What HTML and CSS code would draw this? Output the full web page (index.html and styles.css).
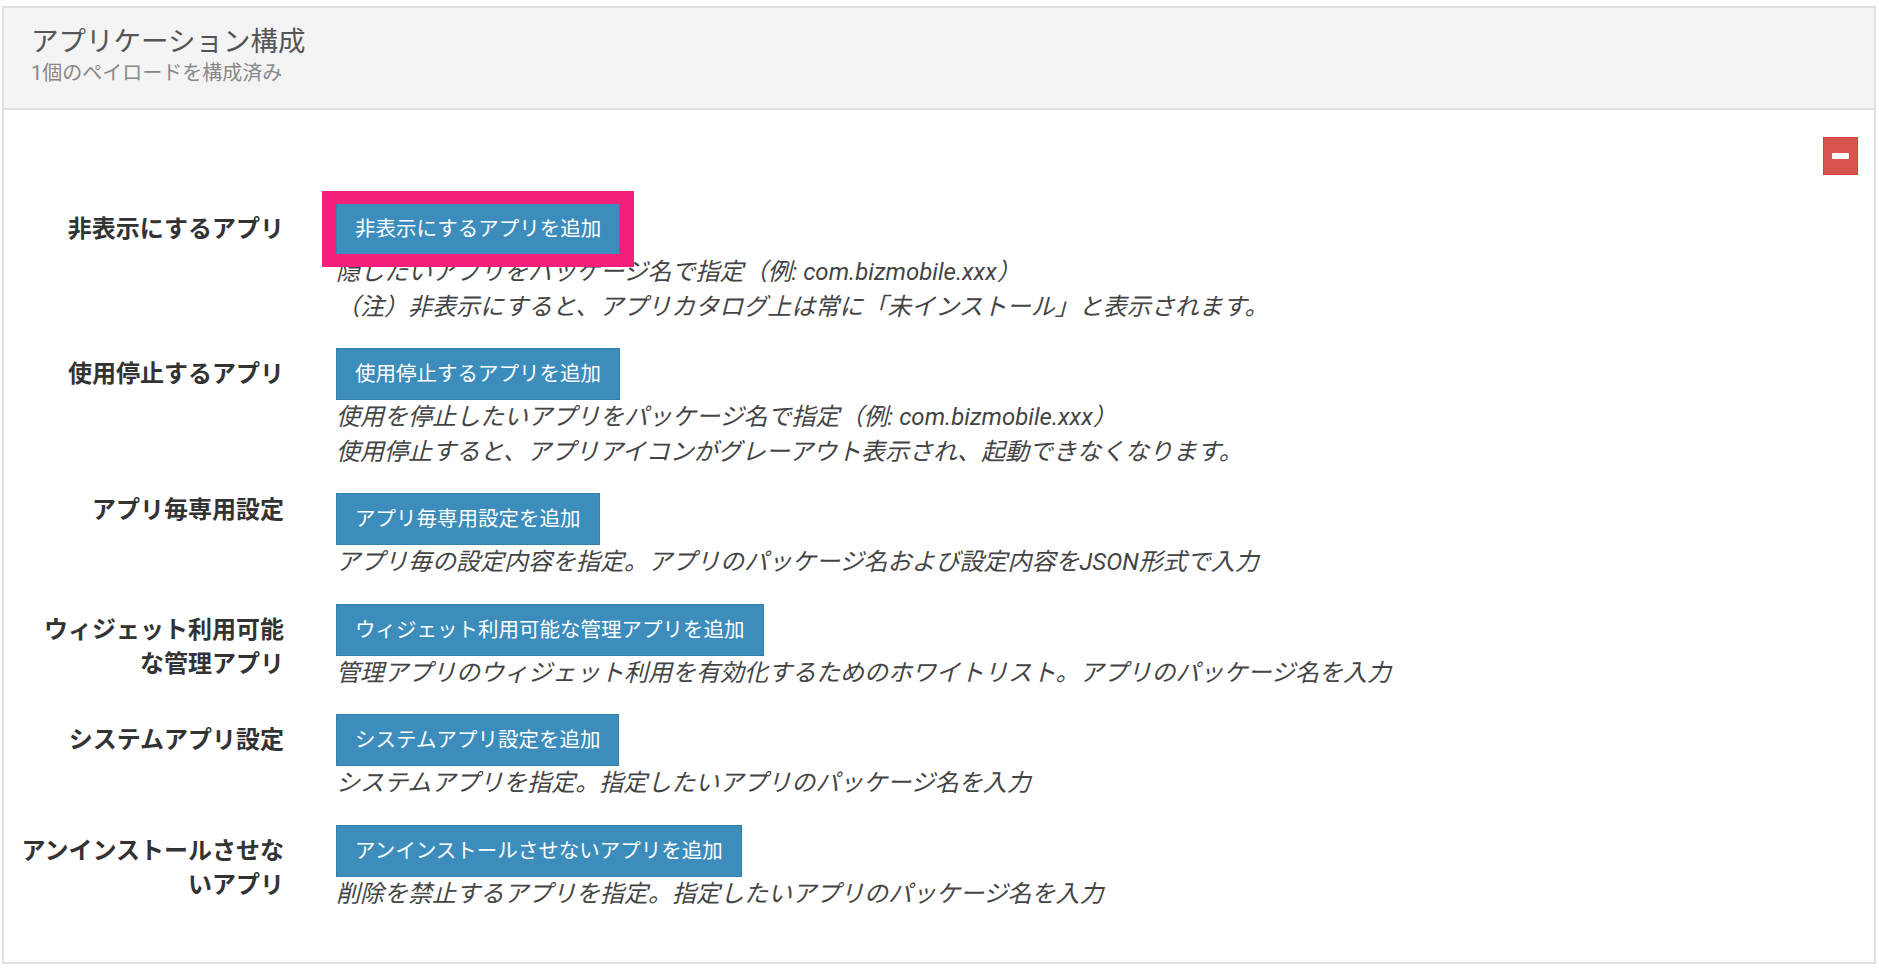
FILE: index.html
```html
<!DOCTYPE html>
<html lang="ja">
  <head>
    <meta charset="UTF-8" />
    <meta name="viewport" content="width=device-width, initial-scale=1.0" />
    <title>アプリケーション構成</title>
    <link rel="stylesheet" href="styles.css">
  </head>
  <body>
    <div class="box">
      <div class="box-header">
        <h3 class="box-title">アプリケーション構成</h3>
        <div class="box-subtitle">1個のペイロードを構成済み</div>
      </div>
      <div class="box-body">
        <div class="box-tools">
          <button type="button" class="btn-remove"><span class="minus"></span></button>
        </div>

        <div class="form-row">
          <label class="row-label">非表示にするアプリ</label>
          <div class="row-field">
            <span class="marked">
              <button type="button" class="btn-add">非表示にするアプリを追加</button>
              <span class="mark"></span>
            </span>
            <p class="help">隠したいアプリをパッケージ名で指定（例: com.bizmobile.xxx）<br>（注）非表示にすると、アプリカタログ上は常に「未インストール」と表示されます。</p>
          </div>
        </div>

        <div class="form-row">
          <label class="row-label">使用停止するアプリ</label>
          <div class="row-field">
            <button type="button" class="btn-add">使用停止するアプリを追加</button>
            <p class="help">使用を停止したいアプリをパッケージ名で指定（例: com.bizmobile.xxx）<br>使用停止すると、アプリアイコンがグレーアウト表示され、起動できなくなります。</p>
          </div>
        </div>

        <div class="form-row">
          <label class="row-label row-label-top">アプリ毎専用設定</label>
          <div class="row-field">
            <button type="button" class="btn-add">アプリ毎専用設定を追加</button>
            <p class="help">アプリ毎の設定内容を指定。アプリのパッケージ名および設定内容をJSON形式で入力</p>
          </div>
        </div>

        <div class="form-row">
          <label class="row-label">ウィジェット利用可能<br>な管理アプリ</label>
          <div class="row-field">
            <button type="button" class="btn-add">ウィジェット利用可能な管理アプリを追加</button>
            <p class="help">管理アプリのウィジェット利用を有効化するためのホワイトリスト。アプリのパッケージ名を入力</p>
          </div>
        </div>

        <div class="form-row">
          <label class="row-label">システムアプリ設定</label>
          <div class="row-field">
            <button type="button" class="btn-add">システムアプリ設定を追加</button>
            <p class="help">システムアプリを指定。指定したいアプリのパッケージ名を入力</p>
          </div>
        </div>

        <div class="form-row">
          <label class="row-label">アンインストールさせな<br>いアプリ</label>
          <div class="row-field">
            <button type="button" class="btn-add">アンインストールさせないアプリを追加</button>
            <p class="help">削除を禁止するアプリを指定。指定したいアプリのパッケージ名を入力</p>
          </div>
        </div>
      </div>
    </div>
  </body>
</html>
```

FILE: styles.css
```css
body {
  margin: 6px 3px 4px 2px;
  font-family: Roboto, "Noto Sans CJK JP", sans-serif;
  color: #333;
  background: #fff;
}
.box {
  border: 2px solid #e0e0e0;
  background: #fff;
}
.box-header {
  background: #f4f4f4;
  border-bottom: 2px solid #e0e0e0;
  padding: 16px 27px 22px;
}
.box-title {
  margin: 0;
  font-size: 27.5px;
  font-weight: normal;
  line-height: 36px;
  color: #555;
}
.box-subtitle {
  font-size: 20px;
  line-height: 26px;
  color: #888;
}
.box-body {
  padding: 27px 16px 27px 12px;
}
.box-tools {
  display: flex;
  justify-content: flex-end;
  margin-bottom: 28px;
}
.btn-remove {
  width: 35px;
  height: 38px;
  padding: 0;
  background: #d9534f;
  border: 1px solid #d43f3a;
  display: flex;
  align-items: center;
  justify-content: center;
  cursor: pointer;
}
.minus {
  width: 17px;
  height: 6px;
  background: #fff;
  border-radius: 1px;
}
.form-row {
  display: grid;
  grid-template-columns: 268px 1fr;
  column-gap: 52px;
  margin-bottom: 24px;
}
.row-label {
  text-align: right;
  white-space: nowrap;
  font-size: 24px;
  font-weight: bold;
  line-height: 34.5px;
  padding-top: 9px;
  color: #333;
}
.row-label-top {
  padding-top: 0;
}
.row-field {
  display: flex;
  flex-direction: column;
  align-items: flex-start;
}
.btn-add {
  font-family: Roboto, "Noto Sans CJK JP", sans-serif;
  font-size: 20.5px;
  line-height: 28px;
  padding: 11px 18px;
  color: #fff;
  background: #3c8dbc;
  border: 1px solid #367fa9;
  border-radius: 0;
  cursor: pointer;
}
.marked {
  position: relative;
  display: inline-block;
}
.marked .btn-add {
  display: block;
}
.mark {
  position: absolute;
  top: -12px;
  bottom: -12px;
  left: -14px;
  right: -14px;
  border: 14px solid #f31f7b;
  border-top-width: 13px;
  border-bottom-width: 13px;
  pointer-events: none;
}
.help {
  margin: 0;
  font-size: 24px;
  line-height: 34.5px;
  font-style: italic;
  color: #444;
}
```
